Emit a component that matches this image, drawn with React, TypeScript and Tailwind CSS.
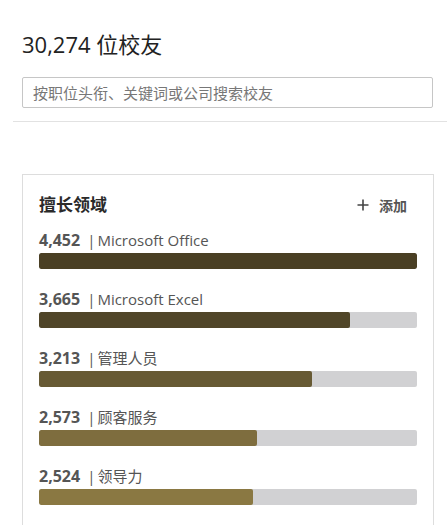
const skills = [
  { count: 4452, name: "Microsoft Office", color: "bg-[#4a3f24]" },
  { count: 3665, name: "Microsoft Excel", color: "bg-[#504528]" },
  { count: 3213, name: "管理人员", color: "bg-[#675a34]" },
  { count: 2573, name: "顾客服务", color: "bg-[#7e6d3e]" },
  { count: 2524, name: "领导力", color: "bg-[#8a7842]" },
];

const max = 4452;

function SkillRow({ count, name, color }: { count: number; name: string; color: string }) {
  return (
    <div className="mt-[20px] first:mt-[13px]">
      <p className="text-[15px] leading-[20px] text-[#555]">
        <span className="font-bold text-[16px]">{count.toLocaleString("en-US")}</span>
        <span className="ml-[7px] mr-[2px]">|</span>
        {name}
      </p>
      <div className="mt-[3px] h-[16px] w-full rounded-[2px] bg-[#d1d1d3] overflow-hidden">
        <div className={`h-full rounded-[2px] ${color}`} style={{ width: `${(count / max) * 100}%` }} />
      </div>
    </div>
  );
}

export default function App() {
  return (
    <div className="w-[447px] min-h-[525px] bg-white font-['Open_Sans','Noto_Sans_CJK_SC',sans-serif] overflow-hidden">
      <div className="pl-[22px] pr-[14px] pt-[29px] pb-[13px]">
        <h1 className="text-[22px] leading-[30px] text-[#222]">30,274 位校友</h1>
        <input
          className="mt-[18px] h-[31px] w-full rounded-[2px] border border-[#c6c6c6] px-[10px] text-[15px] text-[#333] placeholder:text-[#777] outline-none"
          placeholder="按职位头衔、关键词或公司搜索校友"
        />
      </div>
      <div className="ml-[13px] h-px bg-[#e2e2e2]" />
      <div className="pl-[22px] pr-[13px] pt-[52px]">
        <div className="border border-[#dddddd] px-[16px] pt-[18px] pb-[30px]">
          <div className="flex items-center justify-between pr-[10px]">
            <h2 className="text-[17px] leading-[24px] font-bold text-[#2a2a2a]">擅长领域</h2>
            <button className="flex items-center gap-[10px] text-[14px] font-semibold text-[#555]">
              <svg width="12" height="12" viewBox="0 0 12 12" className="text-[#444]">
                <path d="M6 0.5v11M0.5 6h11" stroke="currentColor" strokeWidth="1.6" />
              </svg>
              添加
            </button>
          </div>
          <div>
            {skills.map((s) => (
              <SkillRow key={s.name} {...s} />
            ))}
          </div>
        </div>
      </div>
    </div>
  );
}
